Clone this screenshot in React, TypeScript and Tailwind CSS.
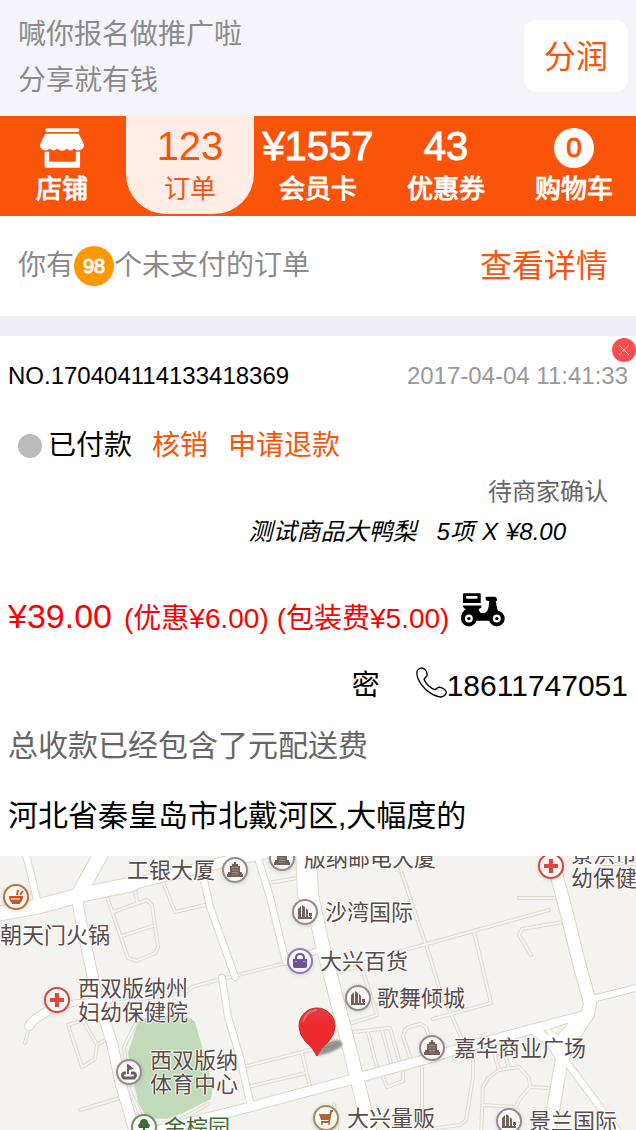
import { useState } from "react";
import clsx from "clsx";

interface ITab {
  id: string;
  label: string;
  value?: string;
}

interface IPlace {
  icon: string;
  x: number;
  y: number;
  labelX: number;
  labelY: number;
  lines: string[];
}

const tabs: ITab[] = [
  { id: "shop", label: "店铺" },
  { id: "orders", label: "订单", value: "123" },
  { id: "card", label: "会员卡", value: "¥1557" },
  { id: "coupon", label: "优惠券", value: "43" },
  { id: "cart", label: "购物车", value: "0" },
];

const places: IPlace[] = [
  { icon: "food", x: 16, y: 41, labelX: 0, labelY: 79, lines: ["朝天门火锅"] },
  { icon: "office", x: 235, y: 14, labelX: 127, labelY: 14, lines: ["工银大厦"] },
  { icon: "office", x: 282, y: 2, labelX: 304, labelY: 2, lines: ["版纳邮电大厦"] },
  { icon: "tower", x: 305, y: 56, labelX: 325, labelY: 56, lines: ["沙湾国际"] },
  { icon: "bag", x: 300, y: 105, labelX: 320, labelY: 105, lines: ["大兴百货"] },
  { icon: "tower", x: 358, y: 142, labelX: 377, labelY: 142, lines: ["歌舞倾城"] },
  { icon: "office", x: 432, y: 192, labelX: 454, labelY: 192, lines: ["嘉华商业广场"] },
  { icon: "tower", x: 509, y: 265, labelX: 529, labelY: 265, lines: ["景兰国际"] },
  { icon: "hospital", x: 551, y: 10, labelX: 571, labelY: -2, lines: ["景洪市妇", "幼保健院"] },
  { icon: "hospital", x: 57, y: 144, labelX: 78, labelY: 132, lines: ["西双版纳州", "妇幼保健院"] },
  { icon: "sport", x: 129, y: 216, labelX: 150, labelY: 204, lines: ["西双版纳", "体育中心"] },
  { icon: "park", x: 144, y: 271, labelX: 164, labelY: 271, lines: ["金棕园"] },
  { icon: "cart", x: 326, y: 262, labelX: 347, labelY: 262, lines: ["大兴量贩"] },
];

const lanes = [
  "M107 41L128 102L137 105L155 97L158 91L152 49L147 44L113 56",
  "M122 80L153 70M135 33L137 46",
  "M163 26L175 56L205 49",
  "M68 169L82 211L95 203L97 189L105 184M68 169L83 164L97 189",
  "M80 254L120 242M25 187L29 172",
  "M136 167L124 191L129 232L143 264M208 248L180 264",
  "M113 147L185 137L192 131L210 126L286 107",
  "M268 27L298 22",
  "M243 211L310 194L340 186M248 231L306 217M302 197L310 231",
  "M337 116L357 111M363 116L377 159L352 167",
  "M353 176L390 172L400 207M368 176L377 212M382 174L392 211",
  "M410 201L403 181L405 174L409 171L420 168L426 171L429 181",
  "M383 221L387 231L403 225V214",
  "M400 12L430 101L439 131L461 181",
  "M393 97L416 91L549 54",
  "M422 211V280M334 248L337 274",
  "M519 42H558M531 99L519 79L522 73L563 66",
  "M474 76L491 147L433 163",
  "M473 201L473 221L466 264L460 269L430 273",
  "M494 197L499 214M504 194L509 212",
  "M481 280L483 231L488 222L499 214L519 211L529 222L530 231L519 244L516 251L483 249",
  "M530 231L548 232M603 8H636M608 8V2",
];

const streets = [
  { d: "M25 -4L30 14L37 44", w: 6 },
  { d: "M203 20L210 51L235 121", w: 6 },
  { d: "M222 122L228 161L240 201L251 251", w: 6 },
  { d: "M256 -4L270 41L278 74L286 106", w: 6 },
  { d: "M286 106L322 93", w: 5 },
  { d: "M30 166L50 154L75 147L110 144", w: 5 },
  { d: "M29 170L34 164L46 156", w: 8 },
  { d: "M592 143L640 131", w: 6 },
  { d: "M563 201L605 258L620 278", w: 6 },
  { d: "M102 -4L80 36", w: 14 },
  { d: "M-4 58L40 50L80 39L133 28", w: 14 },
  { d: "M133 28L220 7L275 -5", w: 10 },
  { d: "M77 42L80 60L87 94L97 140L112 187L121 229L136 280", w: 10 },
  { d: "M140 279L250 251L350 224L423 204L455 194L529 174L583 160", w: 9 },
  { d: "M306 -6L308 38", w: 20 },
  { d: "M311 37L322 87L335 137L350 194L362 243L371 280", w: 13 },
  { d: "M554 10L566 54L579 107L590 147L588 158L573 180L562 203L557 231L549 278", w: 12 },
  { d: "M536 175L553 189L563 206", w: 9 },
];

function ShopIcon() {
  return (
    <svg viewBox="0 0 134 121" className="h-10 w-11" fill="currentColor" aria-hidden="true">
      <rect x="16" width="104" height="12" rx="6" />
      <path d="M16 17H118L134 50A17 17 0 0 1 104 62Q92 74 82 62Q67 76 52 62Q42 74 30 62A17 17 0 0 1 0 50Z" />
      <path d="M14 72H28V102H109V72H122V117Q122 121 118 121H18Q14 121 14 117Z" />
    </svg>
  );
}

function ScooterIcon() {
  return (
    <svg viewBox="0 0 134 102" className="h-[34px] w-11" aria-label="配送">
      <path fillRule="evenodd" d="M10 0H58Q60 0 60 3V30H6V3Q6 0 10 0ZM16 8V17H50V8Z" />
      <path d="M6 37H62V44Q53 46 54 52L60 60H72Q82 56 84 42L86 24L76 21Q72 12 80 11H104Q111 13 110 21L106 26L112 54L120 62L88 84H44L2 72Q0 58 16 48Q6 46 6 37Z" />
      <circle cx="24" cy="77" r="24" />
      <circle cx="109" cy="77" r="24" />
      <g fill="#fff">
        <circle cx="24" cy="77" r="12" />
        <circle cx="109" cy="77" r="12" />
      </g>
      <circle cx="24" cy="77" r="5" />
      <circle cx="109" cy="77" r="5" />
    </svg>
  );
}

function PhoneIcon() {
  return (
    <svg viewBox="0 0 92 92" className="-mt-2 h-[31px] w-[31px]" fill="none" stroke="currentColor" strokeWidth="4" aria-hidden="true">
      <path d="M4 10Q11 2 19 3C28 6 33 16 33 24C32 31 24 32 24 37C27 47 44 64 56 67C61 67 62 60 69 60C78 60 88 67 90 74C91 80 84 87 74 89C53 88 29 70 16 52C7 39 0 23 4 10Z" />
    </svg>
  );
}

function PlaceIcon({ icon }: { icon: string }) {
  return (
    <svg viewBox="0 0 26 26" className="size-[26px] drop-shadow-sm" aria-hidden="true">
      {icon === "food" && (
        <g stroke="#c8571f" fill="#c8571f">
          <circle cx="13" cy="13" r="12" fill="#fffaf5" stroke="#b9733a" strokeWidth="2" />
          <path d="M6 12H20Q20 17 17 19V20H9V19Q6 17 6 12Z" strokeWidth="0" />
          <path d="M14 11L15 6M17 11L20 7" strokeWidth="2" />
          <path d="M8 15H17" stroke="#fff" />
        </g>
      )}
      {icon === "hospital" && (
        <g>
          <circle cx="13" cy="13" r="12" fill="#fff6f5" stroke="#d04a45" strokeWidth="2" />
          <path d="M11 6H15V11H20V15H15V20H11V15H6V11H11Z" fill="#dc4640" />
        </g>
      )}
      {icon === "office" && (
        <g fill="#75605d">
          <circle cx="13" cy="13" r="12" fill="#fbfaf9" stroke="#968b89" strokeWidth="2" />
          <path d="M12 5H14V7H16V9H18V15H20V17H21V20H5V17H6V15H8V9H10V7H12Z" />
          <path d="M11 10V18M13 10V18M15 10V18" stroke="#c9bebb" strokeDasharray="1 1.5" />
        </g>
      )}
      {icon === "tower" && (
        <g fill="#75605d">
          <circle cx="13" cy="13" r="12" fill="#fbfaf9" stroke="#968b89" strokeWidth="2" />
          <path d="M6 10L9 7V18H6ZM10 6L13 8V18H10ZM14 9L16 11V18H14ZM6 18H20V20H6ZM17 14H20V17H19V18H18V17H17Z" />
        </g>
      )}
      {icon === "bag" && (
        <g>
          <circle cx="13" cy="13" r="12" fill="#fbfaff" stroke="#8f79bd" strokeWidth="2" />
          <path d="M6 11H20V18Q20 20 18 20H8Q6 20 6 18Z" fill="#6b539a" />
          <path d="M9 13V10Q9 6 13 6Q17 6 17 10V13" fill="none" stroke="#6b539a" strokeWidth="2" />
          <path d="M9 13V14M17 13V14" stroke="#fff" />
        </g>
      )}
      {icon === "sport" && (
        <g>
          <circle cx="13" cy="13" r="12" fill="#fbfaf9" stroke="#968b89" strokeWidth="2" />
          <path d="M12 5L18 10L13 11V15H11V5Z" fill="#6c5f62" />
          <path d="M10 14H8Q5 16 8 19H18Q21 16 18 14H15" fill="none" stroke="#6c5f62" strokeWidth="3" />
        </g>
      )}
      {icon === "park" && (
        <g>
          <circle cx="13" cy="13" r="12" fill="#f6fbf4" stroke="#7d8a63" strokeWidth="2" />
          <path d="M12 21V14H8Q6 11 9 9Q9 5 13 5Q17 5 17 9Q20 11 18 14H14V21Z" fill="#3f6b3a" />
        </g>
      )}
      {icon === "cart" && (
        <g>
          <circle cx="13" cy="13" r="12" fill="#fffaf2" stroke="#a08d65" strokeWidth="2" />
          <path d="M6 9H17L16 15H8Z" fill="#a8653f" />
          <path d="M20 6H18L16 17H8" fill="none" stroke="#a8653f" strokeWidth="2" />
          <circle cx="9" cy="19" r="1" fill="#a8653f" />
          <circle cx="16" cy="19" r="1" fill="#a8653f" />
        </g>
      )}
    </svg>
  );
}

function DeliveryMap() {
  return (
    <div className="relative h-[274px] overflow-hidden bg-[#f4f3f0] font-['Noto_Sans_CJK_SC',sans-serif]">
      <svg
        viewBox="0 0 636 274"
        preserveAspectRatio="xMinYMin slice"
        className="h-full w-full"
        fill="none"
        strokeLinejoin="round"
        strokeLinecap="round"
        aria-hidden="true"
      >
        <path
          d="M138 166L150 160H187L195 166L203 194L213 230L211 243L183 257L167 263L147 262L138 247L128 197Z"
          fill="#c1dbb9"
        />
        {lanes.map((d, key) => (
          <path key={key} d={d} stroke="#dddbd0" strokeWidth="4" />
        ))}
        {lanes.map((d, key) => (
          <path key={key} d={d} stroke="#f6f5f1" strokeWidth="2" />
        ))}
        {streets.map(({ d, w }, key) => (
          <path key={key} d={d} stroke="#dad7cb" strokeWidth={w + 2} />
        ))}
        {streets.map(({ d, w }, key) => (
          <path key={key} d={d} stroke="#fff" strokeWidth={w} />
        ))}
        <path d="M546 171L582 160L572 184L563 204L552 188Z" fill="#fff" />
        <path d="M550 173L568 167L558 179Z" fill="#f4f3f0" stroke="#dad7cb" />
      </svg>

      {places.map(({ icon, x, y, labelX, labelY, lines }, key) => (
        <div key={key}>
          <div className="absolute -translate-x-1/2 -translate-y-1/2" style={{ left: x, top: y }}>
            <PlaceIcon icon={icon} />
          </div>
          <div
            className={clsx(
              "absolute text-[22px] leading-6 whitespace-nowrap [text-shadow:1px_0_#fff,-1px_0_#fff,0_1px_#fff,0_-1px_#fff]",
              icon === "park" ? "text-[#3f6b3a]" : "text-[#594b4a]"
            )}
            style={{ left: labelX, top: labelY - 14 }}
          >
            {lines.map((line) => (
              <div key={line}>{line}</div>
            ))}
          </div>
        </div>
      ))}

      {/* posição do cliente */}
      <svg viewBox="0 0 48 52" className="absolute top-[150px] left-[297px] h-[52px] w-12" aria-label="收货地址">
        <defs>
          <linearGradient id="pin" x1="0" y1="0" x2="0" y2="1">
            <stop offset="0" stopColor="#d8434a" />
            <stop offset="0.3" stopColor="#ee2b2d" />
            <stop offset="1" stopColor="#ea2a2c" />
          </linearGradient>
          <filter id="soft">
            <feGaussianBlur stdDeviation="1" />
          </filter>
        </defs>
        <path d="M20 50Q24 37 39 34Q47 35 45 40Q38 46 20 50Z" fill="#555" opacity="0.6" filter="url(#soft)" />
        <path d="M20 50Q17 43 8 35Q2 28 2 20A18 18 0 0 1 38 20Q38 28 32 35Q23 43 20 50Z" fill="url(#pin)" stroke="#c82b33" />
        <path d="M6 16Q9 5 20 4" fill="none" stroke="#f08a8a" strokeWidth="2" opacity="0.6" />
      </svg>
    </div>
  );
}

export default function OrdersPage() {
  const [activeTab, setActiveTab] = useState("orders");
  const [showOrder, setShowOrder] = useState(true);

  return (
    <div className="overflow-hidden bg-white font-['Liberation_Sans','Noto_Sans_CJK_SC',sans-serif] text-black">
      {/* Topo */}
      <header className="flex items-start justify-between bg-[#f5f4fa] pt-3 pr-2 pb-3 pl-[18px]">
        <div className="text-[28px] leading-[46px] text-[#8b8b8b]">
          <p>喊你报名做推广啦</p>
          <p>分享就有钱</p>
        </div>
        <button className="mt-2 h-[72px] rounded-xl bg-white px-5 pt-0.5 text-[32px] text-[#fa540a]">分润</button>
      </header>

      <nav className="-mx-0.5 grid h-[100px] grid-cols-5 bg-[#fa540a] text-white">
        {tabs.map(({ id, label, value }) => (
          <button
            key={id}
            onClick={() => setActiveTab(id)}
            className={clsx(
              "flex h-[98px] flex-col items-center pt-3",
              activeTab === id
                ? "rounded-b-[40px] bg-[#feece5] text-[#fa540a]"
                : "[-webkit-text-stroke:1px]"
            )}
          >
            {id === "shop" && <ShopIcon />}
            {id === "cart" && (
              <span className="flex size-10 items-center justify-center rounded-full bg-white text-[28px] leading-10 text-[#fa540a]">
                {value}
              </span>
            )}
            {id !== "shop" && id !== "cart" && (
              <span className="h-10 text-[40px] leading-9">{value}</span>
            )}
            <span className="text-[26px] leading-[42px]">{label}</span>
          </button>
        ))}
      </nav>

      <div className="flex h-[100px] items-center justify-between pr-7 pl-[18px]">
        <p className="flex items-center text-[28px] text-[#8b8b8b]">
          你有
          <span className="flex size-10 items-center justify-center rounded-full bg-[#ff9800] text-xl text-white [-webkit-text-stroke:1px]">
            98
          </span>
          个未支付的订单
        </p>
        <a href="#orders" className="text-[32px] text-[#fa540a]">
          查看详情
        </a>
      </div>
      <div className="h-5 bg-[#efeef4]" />

      {showOrder && (
        <article className="relative">
          <button
            aria-label="删除"
            onClick={() => setShowOrder(false)}
            className="absolute top-0.5 right-0 flex size-6 items-center justify-center rounded-full bg-[#ff4c50]"
          >
            <svg viewBox="0 0 12 12" className="size-3" stroke="#ffc4c5" aria-hidden="true">
              <path d="M1 1L11 11M11 1L1 11" />
            </svg>
          </button>

          <div className="flex h-20 items-center justify-between px-2 text-2xl">
            <span>NO.170404114133418369</span>
            <time className="text-[#999]">2017-04-04 11:41:33</time>
          </div>

          <div className="flex h-[60px] items-center gap-5 px-[18px] text-[28px] leading-[30px]">
            <span className="flex items-center gap-1.5">
              <span className="size-6 rounded-full bg-[#bbb]" />
              已付款
            </span>
            <button className="text-[#fa540a]">核销</button>
            <button className="text-[#fa540a]">申请退款</button>
          </div>

          <p className="pr-7 text-right text-2xl leading-8 text-[#666]">待商家确认</p>
          <p className="flex justify-end gap-2 pr-[70px] text-2xl leading-12 italic">
            <span className="pr-3">测试商品大鸭梨</span>
            <span>5项</span>
            <span>X</span>
            <span>¥8.00</span>
          </p>

          <div className="mt-5 flex h-20 items-center px-2 text-[28px] text-[#f00]">
            <p className="flex items-baseline gap-2 pr-3">
              <span className="pr-1 text-[34px]">¥39.00</span>
              <span>(优惠¥6.00)</span>
              <span>(包装费¥5.00)</span>
            </p>
            <span className="pb-3 text-black">
              <ScooterIcon />
            </span>
          </div>

          <div className="flex h-[60px] items-center justify-end gap-9 px-2">
            <span className="text-[28px]">密</span>
            <a href="tel:18611747051" className="flex items-center text-[30px] leading-9">
              <PhoneIcon />
              18611747051
            </a>
          </div>

          <p className="px-2 text-[30px] leading-[60px] text-[#666]">总收款已经包含了元配送费</p>
          <p className="px-2 text-[30px] leading-[80px]">河北省秦皇岛市北戴河区,大幅度的</p>

          <DeliveryMap />
        </article>
      )}
    </div>
  );
}
